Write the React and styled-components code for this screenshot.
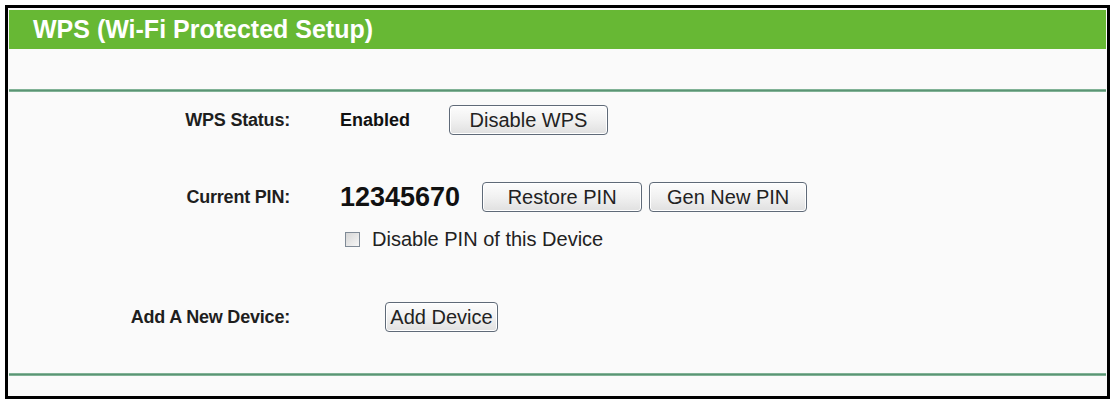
import React, { useState } from 'react';
import styled, { createGlobalStyle } from 'styled-components';

const GlobalStyle = createGlobalStyle`
  body {
    margin: 0;
    background: #ffffff;
    font-family: "Liberation Sans", Arial, sans-serif;
  }
`;

const Frame = styled.div`
  box-sizing: border-box;
  width: 1105px;
  margin: 5px 0 0 5px;
  border: 3px solid #000;
  padding: 2px 1px 2px 1px;
  background: #fafafa;
`;

const TitleBar = styled.div`
  height: 39px;
  display: flex;
  align-items: center;
  padding-left: 24px;
  background: #67b834;
  color: #ffffff;
  font-size: 25px;
  font-weight: bold;
`;

const Spacer = styled.div`
  height: ${(p) => p.h}px;
`;

const Rule = styled.div`
  height: 3px;
  background: linear-gradient(#9cc7ae, #5b9474 40%, #5b9474 60%, #9cc7ae);
`;

const Form = styled.div`
  display: grid;
  grid-template-columns: 281px 1fr;
  column-gap: 50px;
  padding-top: 12px;
`;

const Label = styled.div`
  display: flex;
  align-items: center;
  justify-content: flex-end;
  height: 32px;
  margin-top: ${(p) => p.top || 0}px;
  font-size: 18px;
  font-weight: bold;
  color: #1e1e1e;
  letter-spacing: -0.2px;
`;

const Field = styled.div`
  display: flex;
  align-items: center;
  height: ${(p) => p.h || 32}px;
  margin-top: ${(p) => p.top || 0}px;
  padding-left: ${(p) => p.indent || 0}px;
`;

const Value = styled.span`
  font-size: ${(p) => p.size || 18}px;
  font-weight: bold;
  color: #111;
  margin-right: ${(p) => p.after || 0}px;
`;

const Button = styled.button`
  box-sizing: border-box;
  width: ${(p) => p.w}px;
  height: 30px;
  padding: 0;
  margin-left: ${(p) => p.before || 0}px;
  border: 1px solid #5f6a78;
  border-radius: 4px;
  background: linear-gradient(#fdfdfd, #f1f1f1 50%, #e0e0e0);
  box-shadow: inset 0 0 0 1px #ffffff;
  font-family: "Liberation Sans", Arial, sans-serif;
  font-size: 20px;
  color: #222;
  cursor: pointer;
`;

const Check = styled.input`
  appearance: none;
  box-sizing: border-box;
  width: 15px;
  height: 15px;
  margin: 0 12px 0 5px;
  border: 1px solid #7f8a96;
  background: linear-gradient(135deg, #d6d6d6, #f6f6f6);
  &:checked {
    background: #f6f6f6;
    box-shadow: inset 0 0 0 3px #f6f6f6, inset 0 0 0 10px #333;
  }
`;

const CheckText = styled.label`
  font-size: 20px;
  color: #222;
`;

export default function App() {
  const [pinOff, setPinOff] = useState(false);

  return (
    <>
      <GlobalStyle />
      <Frame>
        <TitleBar>WPS (Wi-Fi Protected Setup)</TitleBar>
        <Spacer h={40} />
        <Rule />
        <Form>
          <Label>WPS Status:</Label>
          <Field>
            <Value after={39}>Enabled</Value>
            <Button w={159}>Disable WPS</Button>
          </Field>

          <Label top={45}>Current PIN:</Label>
          <Field top={45}>
            <Value size={27} after={22}>12345670</Value>
            <Button w={160}>Restore PIN</Button>
            <Button w={158} before={7}>Gen New PIN</Button>
          </Field>

          <div />
          <Field h={24} top={14}>
            <Check
              type="checkbox"
              id="pin"
              checked={pinOff}
              onChange={(e) => setPinOff(e.target.checked)}
            />
            <CheckText htmlFor="pin">Disable PIN of this Device</CheckText>
          </Field>

          <Label top={50}>Add A New Device:</Label>
          <Field top={50} indent={45}>
            <Button w={113}>Add Device</Button>
          </Field>
        </Form>
        <Spacer h={40} />
        <Rule />
        <Spacer h={18} />
      </Frame>
    </>
  );
}
